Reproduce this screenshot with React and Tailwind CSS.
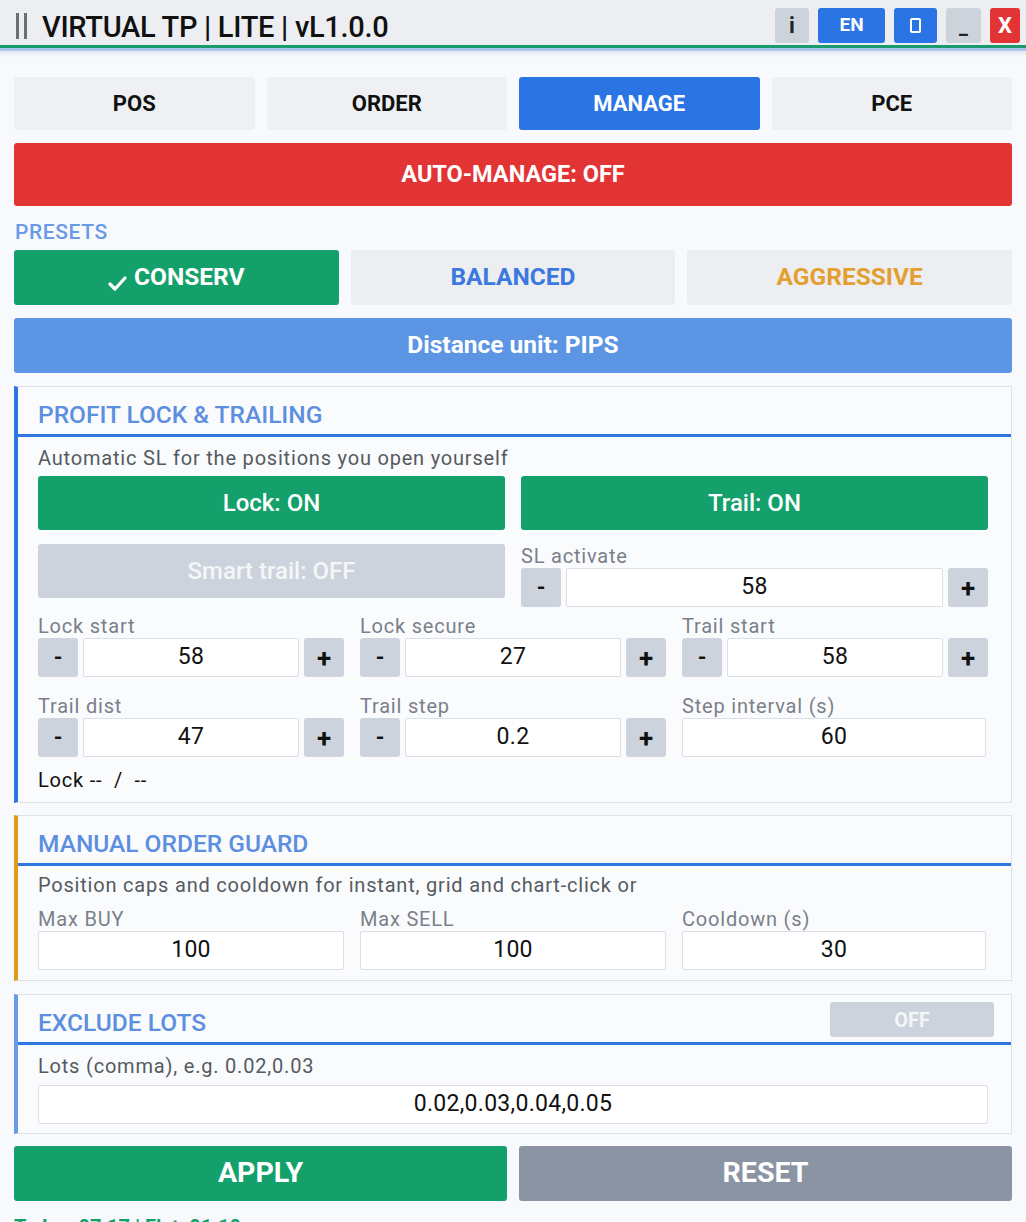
function Stepper({ value }) {
  return (
    <div className="flex gap-[5px] h-[39px]">
      <button className="w-[40px] shrink-0 rounded-[3px] bg-[#ccd3dd] text-[22px] font-bold text-[#111] leading-none">-</button>
      <div className="flex-1 flex items-center justify-center bg-white border border-[#dcdfe5] rounded-[2px] text-[23px] tracking-[0.3px] text-[#111]">
        {value}
      </div>
      <button className="w-[40px] shrink-0 rounded-[3px] bg-[#ccd3dd] text-[26px] font-bold text-[#111] leading-none">+</button>
    </div>
  )
}

function Field({ label, children }) {
  return (
    <div className="flex flex-col">
      <div className="h-[24px] text-[20px] leading-[24px] tracking-[0.8px] text-[#7a808a]">{label}</div>
      {children}
    </div>
  )
}

function Input({ value }) {
  return (
    <div className="h-[39px] flex items-center justify-center bg-white border border-[#dcdfe5] rounded-[2px] text-[23px] tracking-[0.3px] text-[#111]">
      {value}
    </div>
  )
}

function Section({ title, accent, right, children }) {
  return (
    <div className={`bg-[#fafbfd] border border-[#dde2e9] border-l-4 ${accent}`}>
      <div className="h-[47px] flex items-center justify-between pl-[20px] pr-[17px]">
        <span className="text-[24.5px] font-medium text-[#5d8fe0] pt-[10px]">{title}</span>
        {right}
      </div>
      <div className="h-[3px] bg-[#2f78e0]" />
      <div className="pl-[20px] pr-[23px]">{children}</div>
    </div>
  )
}

export default function App() {
  return (
    <div className="w-[1026px] h-[1222px] overflow-hidden bg-[#f7f9fc] font-['Roboto',sans-serif]">
      {/* title bar */}
      <div className="h-[45px] bg-[#eceef2] flex items-end pb-[2px] pl-[16px] pr-[6px]">
        <div className="flex items-center h-[35px] flex-1">
          <div className="flex gap-[5px] mr-[15px]">
            <div className="w-[3px] h-[26px] bg-[#6b6f76]" />
            <div className="w-[3px] h-[26px] bg-[#6b6f76]" />
          </div>
          <span className="text-[29px] leading-[35px] font-medium text-[#111] tracking-[-0.3px] pt-[3px]">VIRTUAL TP | LITE | vL1.0.0</span>
        </div>
        <div className="flex gap-[9px] items-center h-[35px]">
          <div className="w-[34px] h-[35px] rounded-[3px] bg-[#cdd3db] flex items-center justify-center text-[22px] font-bold text-[#222]">i</div>
          <div className="w-[67px] h-[35px] rounded-[3px] bg-[#2a74e3] flex items-center justify-center text-[19px] font-bold text-white">EN</div>
          <div className="w-[43px] h-[35px] rounded-[3px] bg-[#2a74e3] flex items-center justify-center">
            <div className="w-[11px] h-[15px] border-2 border-white rounded-[2px]" />
          </div>
          <div className="w-[35px] h-[35px] rounded-[3px] bg-[#cdd3db] flex items-end justify-center pb-[6px] text-[20px] font-bold text-[#222] leading-none">_</div>
          <div className="w-[30px] h-[35px] rounded-[3px] bg-[#e23434] flex items-center justify-center text-[22px] font-bold text-white">X</div>
        </div>
      </div>
      <div className="h-[3px] bg-[#1b9a6c]" />
      <div className="h-[3px] bg-[#a9c4ec]" />
      <div className="h-[6px] bg-gradient-to-b from-[#e4e7ec] to-[#f7f9fc]" />

      <div className="px-[14px] pt-[20px]">
        {/* tabs */}
        <div className="grid grid-cols-4 gap-[12px] h-[53px]">
          <button className="rounded-[3px] bg-[#eef0f3] text-[22px] font-bold text-[#111]">POS</button>
          <button className="rounded-[3px] bg-[#eef0f3] text-[22px] font-bold text-[#111]">ORDER</button>
          <button className="rounded-[3px] bg-[#2a74e3] text-[22px] font-bold text-white">MANAGE</button>
          <button className="rounded-[3px] bg-[#eef0f3] text-[22px] font-bold text-[#111]">PCE</button>
        </div>

        <div className="mt-[13px] h-[63px] rounded-[3px] bg-[#e23434] flex items-center justify-center text-[23.5px] font-bold text-white">
          AUTO-MANAGE: OFF
        </div>

        <div className="mt-[14px] h-[24px] leading-[24px] pl-[1px] text-[21px] font-medium text-[#6a9ae6] tracking-[0.6px]">PRESETS</div>

        <div className="mt-[6px] grid grid-cols-3 gap-[12px] h-[55px]">
          <button className="rounded-[3px] bg-[#13a06b] flex items-center justify-center gap-[6px] text-[24.5px] font-bold text-white">
            <svg width="20" height="18" viewBox="0 0 20 18" className="mt-[10px]">
              <path d="M2 10 L7 15 L17 4" stroke="white" strokeWidth="3.2" fill="none" strokeLinecap="round" strokeLinejoin="round" />
            </svg>
            CONSERV
          </button>
          <button className="rounded-[3px] bg-[#eceef2] text-[24.5px] font-bold text-[#3b78e0]">BALANCED</button>
          <button className="rounded-[3px] bg-[#eceef2] text-[24.5px] font-bold text-[#e3a030]">AGGRESSIVE</button>
        </div>

        <div className="mt-[13px] h-[55px] rounded-[3px] bg-[#5b95e4] flex items-center justify-center text-[24.5px] font-bold text-white">
          Distance unit: PIPS
        </div>

        {/* profit lock */}
        <div className="mt-[13px]">
          <Section title="PROFIT LOCK & TRAILING" accent="border-l-[#2b74e2]">
            <div className="h-[36px] flex items-end text-[20px] text-[#555a61] tracking-[0.8px]">
              Automatic SL for the positions you open yourself
            </div>
            <div className="mt-[3px] grid grid-cols-2 gap-[16px] h-[54px]">
              <button className="rounded-[3px] bg-[#13a06b] text-[24px] font-medium text-white">Lock: ON</button>
              <button className="rounded-[3px] bg-[#13a06b] text-[24px] font-medium text-white">Trail: ON</button>
            </div>
            <div className="mt-[14px] grid grid-cols-2 gap-[16px]">
              <button className="h-[54px] rounded-[3px] bg-[#cdd3dc] text-[24px] font-medium text-[#f4f6f8]">Smart trail: OFF</button>
              <Field label="SL activate">
                <Stepper value="58" />
              </Field>
            </div>
            <div className="mt-[7px] grid grid-cols-3 gap-[16px]">
              <Field label="Lock start">
                <Stepper value="58" />
              </Field>
              <Field label="Lock secure">
                <Stepper value="27" />
              </Field>
              <Field label="Trail start">
                <Stepper value="58" />
              </Field>
            </div>
            <div className="mt-[17px] grid grid-cols-3 gap-[16px]">
              <Field label="Trail dist">
                <Stepper value="47" />
              </Field>
              <Field label="Trail step">
                <Stepper value="0.2" />
              </Field>
              <Field label="Step interval (s)">
                <div className="pr-[2px]">
                  <Input value="60" />
                </div>
              </Field>
            </div>
            <div className="h-[45px] flex items-center text-[20px] text-[#111] tracking-[0.8px] whitespace-pre">Lock --  /  --</div>
          </Section>
        </div>

        {/* manual order guard */}
        <div className="mt-[12px]">
          <Section title="MANUAL ORDER GUARD" accent="border-l-[#e09a1a]">
            <div className="h-[34px] flex items-end text-[20px] text-[#555a61] tracking-[0.8px]">
              Position caps and cooldown for instant, grid and chart-click or
            </div>
            <div className="mt-[7px] grid grid-cols-3 gap-[16px] pb-[10px]">
              <Field label="Max BUY">
                <Input value="100" />
              </Field>
              <Field label="Max SELL">
                <Input value="100" />
              </Field>
              <Field label="Cooldown (s)">
                <div className="pr-[2px]">
                  <Input value="30" />
                </div>
              </Field>
            </div>
          </Section>
        </div>

        {/* exclude lots */}
        <div className="mt-[13px]">
          <Section
            title="EXCLUDE LOTS"
            accent="border-l-[#6a9ae6]"
            right={
              <div className="w-[164px] h-[35px] rounded-[3px] bg-[#ccd3dd] flex items-center justify-center text-[20px] font-bold text-[#f4f6f8] mt-[2px]">
                OFF
              </div>
            }
          >
            <div className="h-[36px] flex items-end text-[20px] text-[#555a61] tracking-[0.8px]">Lots (comma), e.g. 0.02,0.03</div>
            <div className="mt-[4px] pb-[9px]">
              <Input value="0.02,0.03,0.04,0.05" />
            </div>
          </Section>
        </div>

        <div className="mt-[12px] grid grid-cols-2 gap-[12px] h-[55px]">
          <button className="rounded-[3px] bg-[#13a06b] text-[28.5px] font-bold text-white">APPLY</button>
          <button className="rounded-[3px] bg-[#8b94a2] text-[28.5px] font-bold text-white">RESET</button>
        </div>

        <div className="mt-[14px] text-[20px] leading-[24px] font-bold text-[#13a06b]">Today: 07:17 | Flat: 01:10</div>
      </div>
    </div>
  )
}
